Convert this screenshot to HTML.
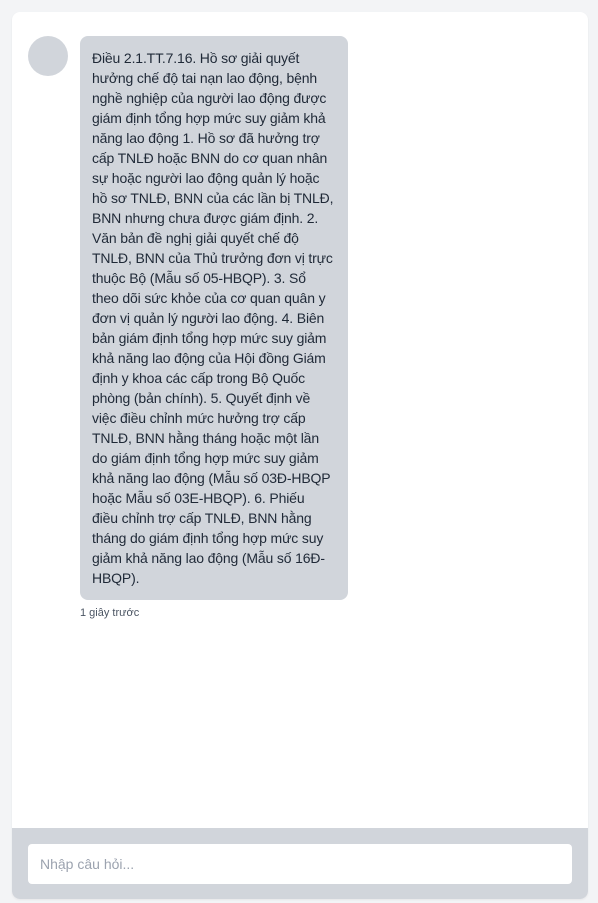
<!DOCTYPE html>
<html><head><meta charset="utf-8"><style>
*{box-sizing:border-box;margin:0;padding:0}
body{width:598px;height:903px;background:#f3f4f6;font-family:"Liberation Sans","DejaVu Sans",sans-serif;position:relative;overflow:hidden}
.card{position:absolute;left:12px;top:12px;width:576px;height:887px;background:#fff;border-radius:8px;overflow:hidden;box-shadow:0 1px 2px rgba(0,0,0,.06)}
.av{position:absolute;left:16px;top:24px;width:40px;height:40px;border-radius:50%;background:#d1d5db}
.bub{position:absolute;left:68px;top:24px;width:268px;height:564px;background:#d1d5db;border-radius:8px;padding:12px 0 0 12px;font-size:14px;line-height:20px;color:#1f2937;white-space:nowrap;letter-spacing:-0.15px}
.ts{position:absolute;left:68px;top:595px;font-size:11px;color:#4b5563}
.foot{position:absolute;left:0;top:816px;width:576px;height:71px;background:#d1d5db}
.inp{position:absolute;left:16px;top:16px;width:544px;height:40px;background:#fff;border-radius:4px;padding-left:12px;line-height:40px;font-size:14px;color:#9ca3af}
</style></head><body>
<div class="card">
<div class="av"></div>
<div class="bub">Điều 2.1.TT.7.16. Hồ sơ giải quyết<br>hưởng chế độ tai nạn lao động, bệnh<br>nghề nghiệp của người lao động được<br>giám định tổng hợp mức suy giảm khả<br>năng lao động 1. Hồ sơ đã hưởng trợ<br>cấp TNLĐ hoặc BNN do cơ quan nhân<br>sự hoặc người lao động quản lý hoặc<br>hồ sơ TNLĐ, BNN của các lần bị TNLĐ,<br>BNN nhưng chưa được giám định. 2.<br>Văn bản đề nghị giải quyết chế độ<br>TNLĐ, BNN của Thủ trưởng đơn vị trực<br>thuộc Bộ (Mẫu số 05-HBQP). 3. Sổ<br>theo dõi sức khỏe của cơ quan quân y<br>đơn vị quản lý người lao động. 4. Biên<br>bản giám định tổng hợp mức suy giảm<br>khả năng lao động của Hội đồng Giám<br>định y khoa các cấp trong Bộ Quốc<br>phòng (bản chính). 5. Quyết định về<br>việc điều chỉnh mức hưởng trợ cấp<br>TNLĐ, BNN hằng tháng hoặc một lần<br>do giám định tổng hợp mức suy giảm<br>khả năng lao động (Mẫu số 03Đ-HBQP<br>hoặc Mẫu số 03E-HBQP). 6. Phiếu<br>điều chỉnh trợ cấp TNLĐ, BNN hằng<br>tháng do giám định tổng hợp mức suy<br>giảm khả năng lao động (Mẫu số 16Đ-<br>HBQP).</div>
<div class="ts">1 giây trước</div>
<div class="foot"><div class="inp">Nhập câu hỏi...</div></div>
</div>
</body></html>
